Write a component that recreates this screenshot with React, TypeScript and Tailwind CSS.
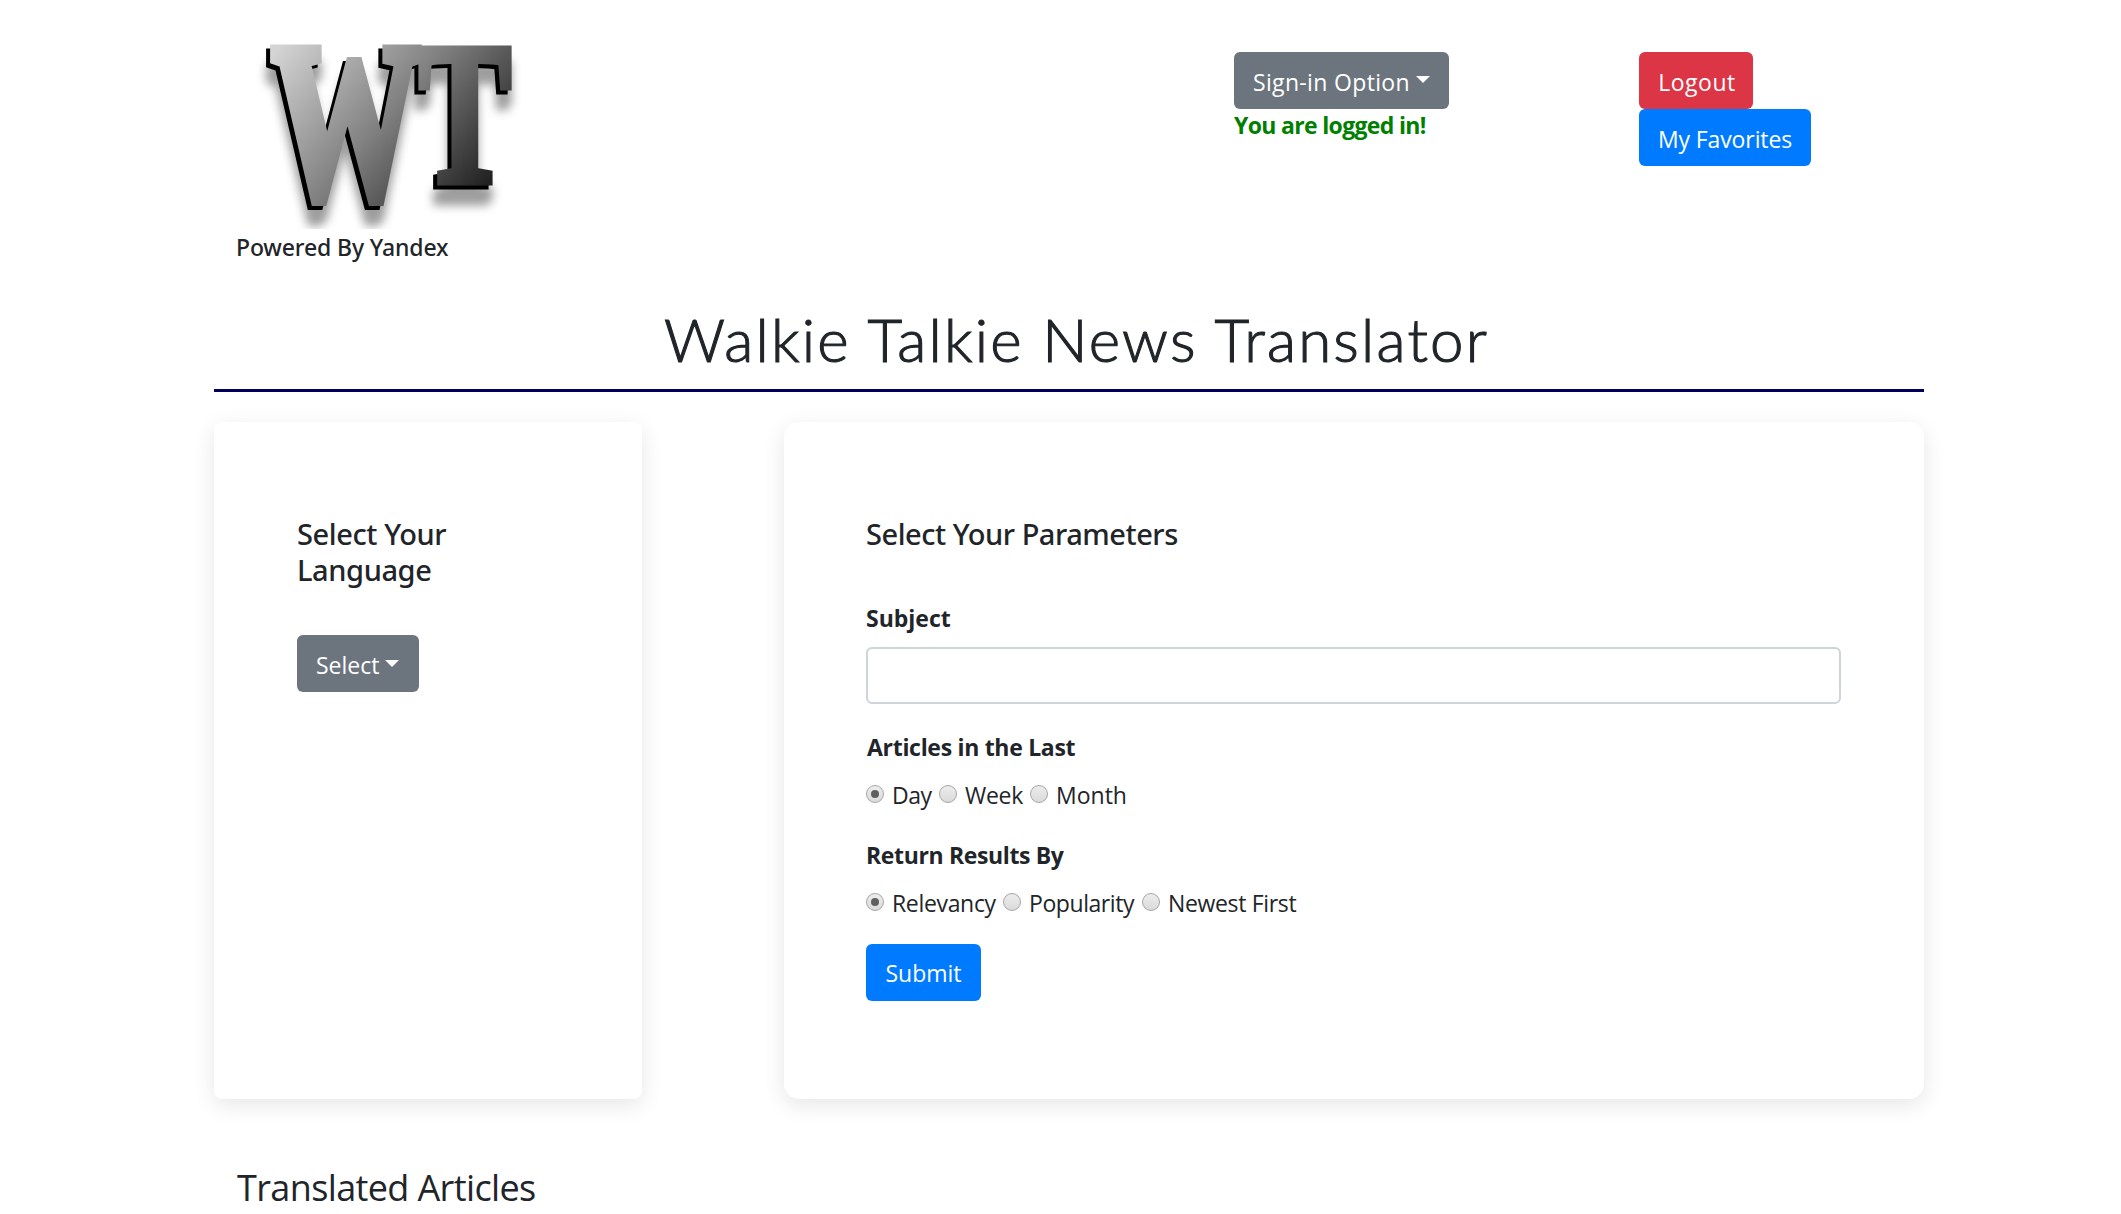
import React from 'react';

function Logo() {
  return (
    <svg className="block h-[229px] w-[320px]" viewBox="0 0 320 229" role="img" aria-label="WT">
      <defs>
        <linearGradient id="steel" gradientUnits="userSpaceOnUse" x1="70" y1="40" x2="265" y2="205">
          <stop offset="0" stopColor="#d4d4d4" />
          <stop offset="0.5" stopColor="#808080" />
          <stop offset="1" stopColor="#1c1c1c" />
        </linearGradient>
      </defs>
      <g
        className="[filter:drop-shadow(-4px_4px_0_#000)_drop-shadow(0_16px_5px_rgba(0,0,0,0.38))]"
        fontFamily="Liberation Serif"
        fontWeight="700"
        fill="url(#steel)"
        stroke="url(#steel)"
      >
        <text x="58" y="197" fontSize="222" textLength="148" lengthAdjust="spacingAndGlyphs" strokeWidth="12">
          W
        </text>
        <text x="205" y="182" fontSize="202" textLength="92" lengthAdjust="spacingAndGlyphs" strokeWidth="8">
          T
        </text>
      </g>
    </svg>
  );
}

function Caret({ className = '' }: { className?: string }) {
  return (
    <span
      className={`inline-block h-0 w-0 border-x-[7px] border-t-[7px] border-x-transparent border-t-white ${className}`}
    />
  );
}

function Radio({
  name,
  label,
  checked = false,
  className = '',
  textClass = '',
}: {
  name: string;
  label: string;
  checked?: boolean;
  className?: string;
  textClass?: string;
}) {
  return (
    <label className={`flex shrink-0 items-center ${className}`}>
      <input type="radio" name={name} defaultChecked={checked} className="peer sr-only" />
      <span className="-mt-[2px] flex size-[18px] shrink-0 items-center justify-center rounded-full border border-[#a6a6a6] bg-linear-to-b from-[#ededed] to-[#dadada] peer-checked:[&>span]:block">
        <span className="hidden size-2 rounded-full bg-[#5f5f5f]" />
      </span>
      <span className={`ml-2 whitespace-nowrap ${textClass}`}>{label}</span>
    </label>
  );
}

export default function App() {
  return (
    <div className="h-[1214px] w-[2121px] overflow-hidden bg-white font-['Open_Sans',sans-serif] text-[23px] leading-[36px] text-[#212529]">
      <div className="ml-[214px] w-[1710px]">
        <header className="flex h-[265px]">
          <div className="w-[1020px]">
            <Logo />
            <h6 className="pl-[22px] font-['Noto_Sans',sans-serif] font-medium tracking-[-0.13px]">Powered By Yandex</h6>
          </div>
          <div className="w-[405px] pt-[52px]">
            <button className="flex h-[57px] w-[215px] items-center rounded-md bg-[#6c757d] pt-[3px] pl-[19px] text-white">
              <span className="tracking-[0.34px]">Sign-in Option</span>
              <Caret className="-mt-[5px] ml-[6px]" />
            </button>
            <p className="-mt-[2px] font-bold tracking-[-0.67px] text-[#008000]">You are logged in!</p>
          </div>
          <div className="flex flex-col items-start pt-[52px]">
            <button className="h-[57px] w-[114px] rounded-md bg-[#dc3545] pt-[3px] pl-[2px] tracking-[0.5px] text-white">Logout</button>
            <button className="h-[57px] w-[172px] rounded-md bg-[#007bff] pt-[3px] tracking-[-0.1px] text-white">My Favorites</button>
          </div>
        </header>

        <h1 className="mt-[38px] h-[89px] border-b-[3px] border-[#00005c] pl-[450px] font-['Lato',sans-serif] text-[60px] leading-[72px] font-light tracking-[2.2px] whitespace-nowrap [-webkit-text-stroke:1.1px_#212529]">
          Walkie Talkie News Translator
        </h1>

        <main className="mt-[30px] flex h-[677px] justify-between">
          <section className="w-[428px] rounded-lg px-[83px] pt-[94px] shadow-[0_6px_22px_rgba(0,0,0,0.1)]">
            <h5 className="font-['Noto_Sans',sans-serif] text-[29px] font-medium tracking-[-0.4px]">
              Select Your
              <br />
              Language
            </h5>
            <button className="mt-[47px] flex h-[57px] w-[122px] items-center rounded-md bg-[#6c757d] pt-[2px] pl-[19px] text-white">
              Select
              <Caret className="-mt-[3px] ml-[6px]" />
            </button>
          </section>

          <section className="w-[1140px] rounded-[15px] pt-[94px] pr-[83px] pl-[82px] shadow-[0_6px_22px_rgba(0,0,0,0.1)]">
            <h5 className="font-['Noto_Sans',sans-serif] text-[29px] font-medium tracking-[-0.46px]">Select Your Parameters</h5>
            <form onSubmit={(e: React.FormEvent) => e.preventDefault()}>
              <label htmlFor="subject" className="mt-12 block font-bold">Subject</label>
              <input
                id="subject"
                type="text"
                className="mt-[11px] block h-[57px] w-full rounded-md border-2 border-[#ced4da] bg-white px-4 outline-none"
              />
              <p className="mt-[25px] pl-px font-bold tracking-[-0.3px]">Articles in the Last</p>
              <div className="mt-3 flex">
                <Radio name="range" label="Day" checked className="w-[73px]" textClass="tracking-[-0.5px]" />
                <Radio name="range" label="Week" className="w-[91px]" textClass="tracking-[-0.3px]" />
                <Radio name="range" label="Month" />
              </div>
              <p className="mt-6 font-bold tracking-[-0.36px]">Return Results By</p>
              <div className="mt-3 flex">
                <Radio name="sort" label="Relevancy" checked className="w-[137px]" textClass="tracking-[-0.33px]" />
                <Radio name="sort" label="Popularity" className="w-[139px]" textClass="tracking-[-0.43px]" />
                <Radio name="sort" label="Newest First" textClass="tracking-[-0.34px]" />
              </div>
              <button className="mt-[23px] block h-[57px] w-[115px] rounded-md bg-[#007bff] pt-px text-white">Submit</button>
            </form>
          </section>
        </main>

        <h3 className="mt-[67px] pl-[23px] text-[36px] leading-[43px] tracking-[-0.62px]">Translated Articles</h3>
      </div>
    </div>
  );
}
